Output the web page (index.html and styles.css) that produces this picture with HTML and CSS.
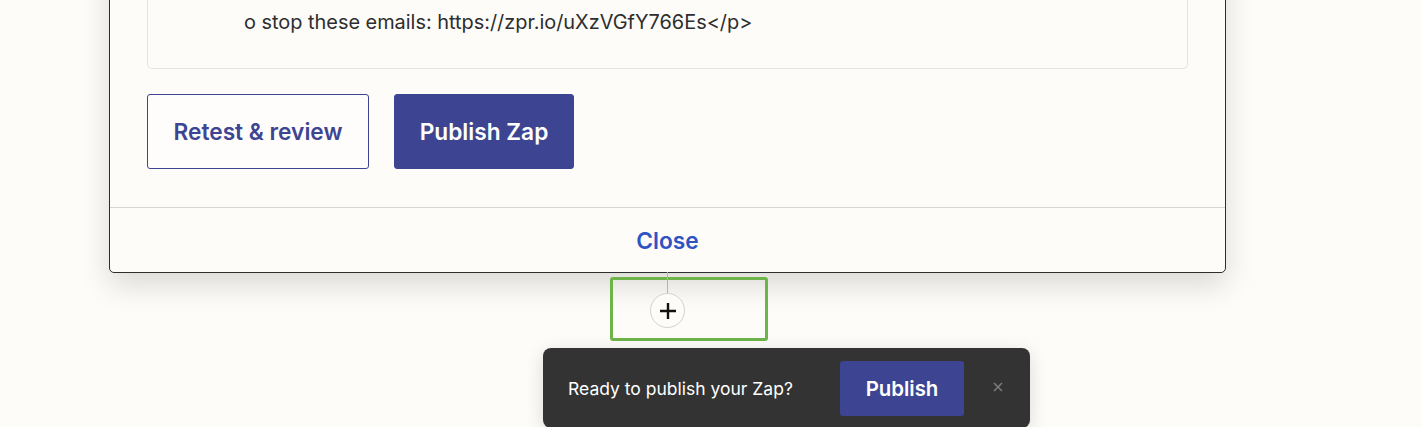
FILE: index.html
```html
<!DOCTYPE html>
<html lang="en">
<head>
<meta charset="utf-8">
<title>Publish Zap</title>
<link rel="stylesheet" href="styles.css">
</head>
<body>
<div class="stage">
  <section class="modal">
    <div class="modal-body">
      <div class="code-box">
        <div class="code-line code-prev"><span class="code-red">p</span></div>
        <div class="code-line">o stop these emails: https://zpr.io/uXzVGfY766Es&lt;/p&gt;</div>
      </div>
      <div class="actions">
        <button class="btn btn-outline">Retest &amp; review</button>
        <button class="btn btn-primary">Publish Zap</button>
      </div>
    </div>
    <div class="modal-footer">
      <button class="link-btn">Close</button>
    </div>
  </section>

  <div class="step-row">
    <div class="step-highlight">
      <button class="add-step" aria-label="Add step">
        <svg width="20" height="20" viewBox="0 0 20 20" aria-hidden="true">
          <path d="M10 2v16M2 10h16" stroke="#111" stroke-width="2.4" fill="none"/>
        </svg>
      </button>
    </div>
  </div>

  <div class="toast">
    <span class="toast-text">Ready to publish your Zap?</span>
    <button class="toast-btn">Publish</button>
    <button class="toast-close" aria-label="Dismiss">
      <svg width="10" height="10" viewBox="0 0 10 10" aria-hidden="true">
        <path d="M1 1l8 8M9 1l-8 8" stroke="#7a7a7a" stroke-width="1.6" fill="none"/>
      </svg>
    </button>
  </div>
</div>
</body>
</html>
```

FILE: styles.css
```css
* { box-sizing: border-box; }

html, body {
  margin: 0;
  padding: 0;
  background: #fdfcf8;
}

body {
  font-family: Inter, "Noto Sans", "Liberation Sans", sans-serif;
  color: #2d2e2e;
}

button {
  font-family: inherit;
  cursor: pointer;
}

.stage {
  width: 1422px;
  height: 427px;
  overflow: hidden;
  display: flex;
  flex-direction: column;
  align-items: flex-start;
}

.modal {
  margin-top: -41px;
  margin-left: 109px;
  width: 1117px;
  background: #fdfcf8;
  border: 1px solid #2d2e2e;
  border-radius: 0 0 5px 5px;
  box-shadow: 0 12px 30px rgba(0, 0, 0, 0.14);
  flex-shrink: 0;
}

.modal-body {
  padding: 0 37px 38px;
  border-bottom: 1px solid #d7d6d3;
}

.code-box {
  border: 1px solid #e4e3e0;
  border-top: none;
  border-radius: 0 0 5px 5px;
  padding: 0 0 31px 96px;
  font-size: 19.9px;
  line-height: 29px;
}

.code-line {
  white-space: nowrap;
}

.code-prev {
  height: 48px;
  padding-left: 12px;
  line-height: 28px;
  padding-top: 10px;
}

.code-red {
  color: #b51a00;
}

.actions {
  display: flex;
  gap: 25px;
  margin-top: 25px;
}

.btn {
  height: 75px;
  border-radius: 3px;
  font-size: 22.7px;
  font-weight: 600;
  padding: 0;
}

.btn-outline {
  width: 222px;
  background: #fefdfb;
  border: 1px solid #3d4592;
  color: #3d4592;
}

.btn-primary {
  width: 180px;
  background: #3d4592;
  border: 1px solid #3d4592;
  color: #ffffff;
}

.modal-footer {
  height: 64px;
  display: flex;
  align-items: center;
  justify-content: center;
}

.link-btn {
  background: none;
  border: none;
  padding: 0;
  font-size: 22.7px;
  font-weight: 600;
  color: #3053c4;
}

.step-row {
  margin-left: 610px;
  margin-top: 4px;
}

.step-highlight {
  width: 158px;
  height: 64px;
  border: 3px solid #6db44a;
  border-radius: 3px;
  padding: 13px 0 0 37px;
}

.add-step {
  position: relative;
  width: 35px;
  height: 35px;
  border-radius: 50%;
  border: 1px solid #d3d2cf;
  background: #fdfcf8;
  display: flex;
  align-items: center;
  justify-content: center;
  padding: 0;
}

.add-step::before {
  content: "";
  position: absolute;
  left: 16px;
  top: -22px;
  width: 1px;
  height: 21px;
  background: #b4b3b0;
}

.toast {
  margin-top: 7px;
  margin-left: 543px;
  width: 487px;
  height: 80px;
  flex-shrink: 0;
  background: #333333;
  border-radius: 8px;
  display: flex;
  align-items: center;
  padding: 0 24px 0 25px;
  box-shadow: 0 4px 18px rgba(0, 0, 0, 0.14);
}

.toast-text {
  color: #ffffff;
  font-size: 17.5px;
  flex: 1;
  margin-top: 1px;
  white-space: nowrap;
}

.toast-btn {
  width: 124px;
  height: 55px;
  background: #3d4592;
  border: none;
  border-radius: 3px;
  color: #ffffff;
  font-size: 20.4px;
  font-weight: 600;
  flex-shrink: 0;
}

.toast-close {
  background: none;
  border: none;
  margin-left: 26px;
  width: 16px;
  height: 16px;
  padding: 0;
  display: flex;
  align-items: center;
  justify-content: center;
  margin-top: -2px;
  flex-shrink: 0;
}
```
